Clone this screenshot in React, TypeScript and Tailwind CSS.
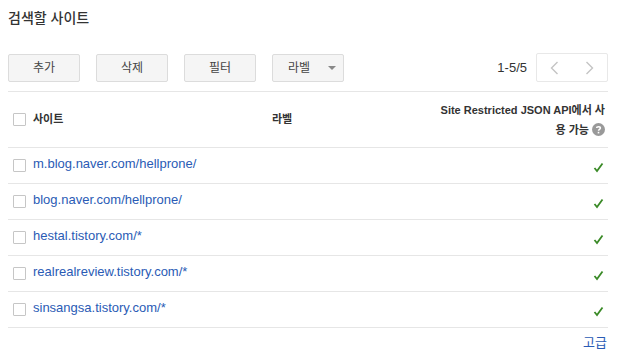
import React from 'react';

const sites = [
  'm.blog.naver.com/hellprone/',
  'blog.naver.com/hellprone/',
  'hestal.tistory.com/*',
  'realrealreview.tistory.com/*',
  'sinsangsa.tistory.com/*',
];

const Checkbox = () => (
  <span className="inline-block w-[13px] h-[13px] border border-[#c6c6c6] bg-white rounded-[1px] shrink-0" />
);

const Check = () => (
  <svg width="11" height="11" viewBox="0 0 11 11">
    <path d="M1.5 6 L4 9 L9.5 1.5" fill="none" stroke="#3a8a27" strokeWidth="1.8" />
  </svg>
);

const App = () => {
  return (
    <div className="w-[631px] h-[358px] bg-white px-2 text-[#222]" style={{ fontFamily: '"Liberation Sans", "Noto Sans CJK KR", sans-serif' }}>
      <h2 className="pt-[8px] text-[14px] leading-[20px] font-medium text-[#333]">검색할 사이트</h2>

      <div className="mt-[25px] flex items-center w-[600px]">
        <div className="flex gap-4">
          {['추가', '삭제', '필터'].map((b) => (
            <button key={b} className="w-[72px] h-[28px] bg-[#f5f5f5] border border-[#dcdcdc] rounded-[2px] text-[12px] text-[#444]">
              {b}
            </button>
          ))}
          <button className="w-[72px] h-[28px] bg-[#f5f5f5] border border-[#dcdcdc] rounded-[2px] text-[12px] text-[#444] flex items-center justify-center gap-[18px] pl-[8px]">
            라벨
            <span className="w-0 h-0 border-l-[4px] border-r-[4px] border-t-[4px] border-l-transparent border-r-transparent border-t-[#888]" />
          </button>
        </div>
        <div className="ml-auto flex items-center">
          <span className="text-[13px] text-[#333] mr-[9px]">1-5/5</span>
          <div className="flex border border-[#e8e8e8] rounded-[2px] h-[29px]">
            <button className="w-[35px] flex items-center justify-center">
              <svg width="9" height="14" viewBox="0 0 9 14"><path d="M7.5 1 L1.5 7 L7.5 13" fill="none" stroke="#c4c4c4" strokeWidth="1.4" /></svg>
            </button>
            <button className="w-[35px] flex items-center justify-center">
              <svg width="9" height="14" viewBox="0 0 9 14"><path d="M1.5 1 L7.5 7 L1.5 13" fill="none" stroke="#c4c4c4" strokeWidth="1.4" /></svg>
            </button>
          </div>
        </div>
      </div>

      <div className="mt-[9px] w-[600px] border-t border-[#e6e6e6]">
        <div className="h-[55px] flex items-center text-[11px] font-bold text-[#333]">
          <div className="w-[264px] flex items-center gap-[7px] pl-[5px]">
            <Checkbox />
            <span>사이트</span>
          </div>
          <div className="flex-1">라벨</div>
          <div className="w-[172px] pr-[3px] leading-[20px] flex flex-col items-end">
            <span>Site Restricted JSON API에서 사</span>
            <span className="flex items-center gap-[3px]">
              용 가능
              <svg width="13" height="13" viewBox="0 0 13 13">
                <circle cx="6.5" cy="6.5" r="6.5" fill="#999" />
                <path d="M4.6 5 C4.6 3.2 8.4 3.2 8.4 5 C8.4 6.3 6.5 6.3 6.5 7.8" fill="none" stroke="#fff" strokeWidth="1.5" />
                <rect x="5.7" y="8.8" width="1.6" height="1.6" fill="#fff" />
              </svg>
            </span>
          </div>
        </div>
        {sites.map((s) => (
          <div key={s} className="h-[36px] border-t border-[#e6e6e6] flex items-center">
            <div className="flex items-center gap-[7px] pl-[5px]">
              <Checkbox />
              <a className="text-[13px] text-[#2a5bb5] -mt-[3px]">{s}</a>
            </div>
            <div className="ml-auto pr-[4px] pt-[3px]">
              <Check />
            </div>
          </div>
        ))}
        <div className="border-t border-[#e6e6e6] pt-[2px] text-right">
          <a className="text-[13px] text-[#2a5bb5] pr-[1px]">고급</a>
        </div>
      </div>
    </div>
  );
};

export default App;
